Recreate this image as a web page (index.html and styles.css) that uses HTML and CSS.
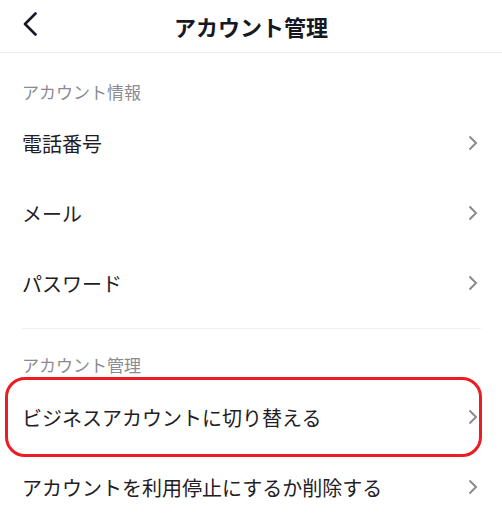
FILE: index.html
```html
<!DOCTYPE html>
<html lang="ja">
<head>
    <meta charset="UTF-8">
    <meta name="viewport" content="width=device-width, initial-scale=1.0">
    <title>アカウント管理</title>
    <link rel="stylesheet" href="styles.css">
</head>
<body>
    <div class="header">
        <span class="back">
            <svg width="14" height="24" viewBox="0 0 14 24"><polyline points="12.5,1.5 2,12 12.5,22.5" fill="none" stroke="#161823" stroke-width="2.6" stroke-linecap="round" stroke-linejoin="round"/></svg>
        </span>
        <h1>アカウント管理</h1>
    </div>

    <div class="section-label first">アカウント情報</div>
    <div class="row">
        <span>電話番号</span>
        <svg class="chev" width="10" height="16" viewBox="0 0 10 16"><polyline points="1.5,1.5 8,8 1.5,14.5" fill="none" stroke="#8a8b91" stroke-width="2"/></svg>
    </div>
    <div class="row">
        <span>メール</span>
        <svg class="chev" width="10" height="16" viewBox="0 0 10 16"><polyline points="1.5,1.5 8,8 1.5,14.5" fill="none" stroke="#8a8b91" stroke-width="2"/></svg>
    </div>
    <div class="row">
        <span>パスワード</span>
        <svg class="chev" width="10" height="16" viewBox="0 0 10 16"><polyline points="1.5,1.5 8,8 1.5,14.5" fill="none" stroke="#8a8b91" stroke-width="2"/></svg>
    </div>

    <div class="divider"></div>

    <div class="section-label">アカウント管理</div>
    <div class="row marked">
        <span>ビジネスアカウントに切り替える</span>
        <svg class="chev" width="10" height="16" viewBox="0 0 10 16"><polyline points="1.5,1.5 8,8 1.5,14.5" fill="none" stroke="#8a8b91" stroke-width="2"/></svg>
        <div class="highlight"></div>
    </div>
    <div class="row">
        <span>アカウントを利用停止にするか削除する</span>
        <svg class="chev" width="10" height="16" viewBox="0 0 10 16"><polyline points="1.5,1.5 8,8 1.5,14.5" fill="none" stroke="#8a8b91" stroke-width="2"/></svg>
    </div>
</body>
</html>
```

FILE: styles.css
```css
body {
    margin: 0;
    background: #fff;
    font-family: "Noto Sans CJK JP", "Noto Sans", sans-serif;
    color: #1f2025;
    overflow: hidden;
}
.header {
    height: 52px;
    border-bottom: 1px solid #ebebeb;
    display: flex;
    align-items: center;
    justify-content: center;
    position: relative;
}
.header h1 {
    margin: 0;
    font-size: 22px;
    font-weight: 700;
    color: #161823;
    line-height: 1;
}
.back {
    position: absolute;
    left: 23px;
    top: 12px;
    display: flex;
}
.section-label {
    font-size: 17px;
    line-height: 20px;
    color: #8a8b91;
    padding: 26px 22px 7px;
}
.section-label.first {
    padding-top: 29px;
    padding-bottom: 6px;
}
.row {
    height: 70px;
    padding: 0 24px 0 22px;
    display: flex;
    align-items: center;
    justify-content: space-between;
    font-size: 20px;
    position: relative;
}
.chev {
    flex-shrink: 0;
}
.divider {
    height: 1px;
    background: #f0f0f0;
    margin: 10px 21px 0 22px;
}
.highlight {
    position: absolute;
    left: 5px;
    right: 20px;
    top: -5px;
    bottom: -5px;
    border: 3.5px solid #ec1c24;
    border-radius: 20px;
}
```
